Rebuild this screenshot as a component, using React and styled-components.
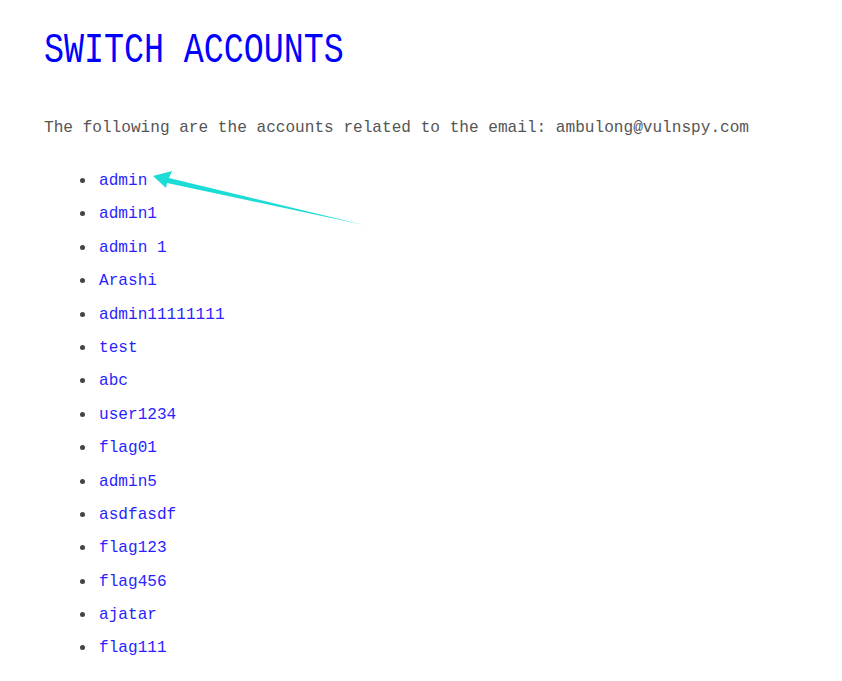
import styled, { createGlobalStyle } from 'styled-components'

const Global = createGlobalStyle`
    body{
        margin: 0;
        background: #fff;
        font-family: "Liberation Mono", "DejaVu Sans Mono", monospace;
    }
`

const accounts = ['admin', 'admin1', 'admin 1', 'Arashi', 'admin11111111', 'test', 'abc', 'user1234', 'flag01', 'admin5', 'asdfasdf', 'flag123', 'flag456', 'ajatar', 'flag111']

function App() {
    return (
        <Page>
            <Global />
            <Title>SWITCH ACCOUNTS</Title>
            <Intro>The following are the accounts related to the email: ambulong@vulnspy.com</Intro>
            <List>
                {accounts.map((a, i) => (
                    <Item key={i}><a href="#">{a}</a></Item>
                ))}
            </List>
            <Arrow width="230" height="70" viewBox="140 165 230 70">
                <path d="M153 176 L172 171 L169 178 L364 225 L167 183 L166 188 Z" fill="#1ddcd6" />
            </Arrow>
        </Page>
    )
}

const Page = styled.div`
    position: relative;
    padding: 31px 0 0 44px;
`
const Title = styled.h1`
    margin: 0;
    font-size: 33.3px;
    font-weight: normal;
    line-height: 40px;
    color: #0000ff;
    transform: scaleY(1.25);
    transform-origin: left center;
    white-space: nowrap;
`
const Intro = styled.p`
    margin: 47px 0 0 0;
    font-size: 16.1px;
    line-height: 20px;
    color: #555;
    white-space: nowrap;
`
const List = styled.ul`
    margin: 33px 0 0 0;
    padding-left: 55px;
    list-style: none;
`
const Item = styled.li`
    position: relative;
    height: 33.4px;
    font-size: 16.1px;
    line-height: 20px;
    a{
        color: #2a1fff;
        text-decoration: none;
    }
    &::before{
        content: '';
        position: absolute;
        left: -19px;
        top: 7px;
        width: 5px;
        height: 5px;
        border-radius: 50%;
        background: #444;
    }
`
const Arrow = styled.svg`
    position: absolute;
    left: 140px;
    top: 165px;
`

export default App
